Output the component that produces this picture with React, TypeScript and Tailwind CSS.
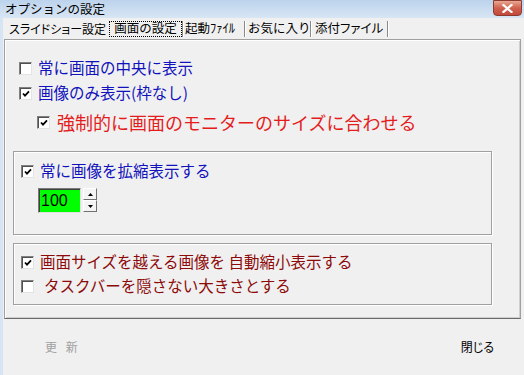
import React from "react"

const font = "font-['MS_UI_Gothic','Noto_Sans_CJK_JP',sans-serif]"

function CheckBox({ checked }: { checked?: boolean }) {
  return (
    <div className="relative w-[13px] h-[13px] shrink-0 bg-white border border-t-[#808080] border-l-[#808080] border-r-[#e3e3e3] border-b-[#e3e3e3] shadow-[inset_1px_1px_0_#505050]">
      {checked && (
        <svg className="absolute left-[1px] top-[1px]" width="10" height="10" viewBox="0 0 10 10">
          <path d="M2 4.5 L4 6.6 L8 2.4" stroke="#000" strokeWidth="1.8" fill="none" />
        </svg>
      )}
    </div>
  )
}

function Row({ checked, children, className = "" }: { checked?: boolean; children: React.ReactNode; className?: string }) {
  return (
    <div className={"flex items-center h-[24px] gap-[6px] whitespace-nowrap " + className}>
      <CheckBox checked={checked} />
      {children}
    </div>
  )
}

function Sep() {
  return <div className="w-[2px] h-[16px] shrink-0 border-l border-l-[#8a8a8a] border-r border-r-white" />
}

export default function App() {
  return (
    <div className={"w-[524px] h-[375px] flex flex-col bg-[#f0f0f0] overflow-hidden text-black " + font}>
      {/* title bar */}
      <div className="h-[18px] flex items-start bg-gradient-to-b from-[#bcd3ec] to-[#d8e6f4]">
        <span className="pl-[5px] pt-[1px] text-[12.5px] leading-[16px] whitespace-nowrap">オプションの設定</span>
        <div className="ml-auto mr-[2px] w-[29px] h-[16px] rounded-b-[4px] border border-[#8d3a30] bg-gradient-to-b from-[#e8a894] via-[#d0604e] to-[#c24a3a] flex items-center justify-center">
          <svg width="11" height="9" viewBox="0 0 11 9">
            <path d="M1.5 1 L9.5 8 M9.5 1 L1.5 8" stroke="#fff" strokeWidth="2.2" strokeLinecap="square" />
          </svg>
        </div>
      </div>

      <div className="flex-1 flex">
        <div className="w-[3px] bg-[#d6e4f4]" />
        <div className="flex-1 flex flex-col">
          {/* tabs */}
          <div className="h-[21px] flex items-center pl-[2px] text-[12px] leading-none whitespace-nowrap">
            <div className="w-[104px] shrink-0 pl-[4px] [font-feature-settings:'palt']">スライドショー設定</div>
            <div className="w-[73px] shrink-0 h-[16px] border border-dotted border-black flex items-center justify-center text-[12.5px]">画面の設定</div>
            <Sep />
            <div className="w-[60px] shrink-0 pl-[1px] text-[12.5px]">起動ﾌｧｲﾙ</div>
            <Sep />
            <div className="w-[64px] shrink-0 pl-[2px] text-[12.5px]">お気に入り</div>
            <Sep />
            <div className="w-[75px] shrink-0 pl-[3px] [font-feature-settings:'palt'] text-[12.5px]">添付ファイル</div>
            <Sep />
          </div>

          {/* panel */}
          <div className="mx-[1px] h-[280px] border border-t-[#a0a0a0] border-l-[#a0a0a0] border-r-[#a0a0a0] border-b-[#6a6a6a] shadow-[inset_1px_1px_0_#fff,inset_-1px_-1px_0_#cfcfcf] pl-[8px] pt-[16px]">
            <div className="pl-[6px] text-[#1212bc] text-[15.5px] leading-none">
              <Row>常に画面の中央に表示</Row>
              <Row checked className="mt-[1px]">画像のみ表示(枠なし)</Row>
            </div>
            <div className="pl-[24px] mt-[4px] flex items-center h-[26px] gap-[7px] whitespace-nowrap">
              <CheckBox checked />
              <span className="text-[18px] leading-none text-[#e41c1c]">強制的に画面のモニターのサイズに合わせる</span>
            </div>

            <div className="mt-[16px] w-[479px] h-[84px] border border-[#a0a0a0] shadow-[inset_1px_1px_0_#fff,1px_1px_0_#fff] pl-[7px] pt-[7px]">
              <Row checked className="text-[#1212bc] text-[15.5px] leading-none">常に画像を拡縮表示する</Row>
              <div className="mt-[5px] ml-[17px] flex items-start gap-[2px]">
                <div className="w-[43px] h-[25px] bg-[#00ff00] border border-t-[#7a7a7a] border-l-[#7a7a7a] border-r-[#e0e0e0] border-b-[#e0e0e0] shadow-[inset_1px_1px_0_#404040] flex items-center pl-[2px] font-['Liberation_Sans',sans-serif] text-[16px] leading-none">
                  100
                </div>
                <div className="flex flex-col">
                  <div className="w-[14px] h-[12px] bg-[#f4f4f4] border border-t-white border-l-white border-r-[#707070] border-b-[#707070] flex items-center justify-center">
                    <svg width="5" height="3" viewBox="0 0 5 3"><path d="M2.5 0 L5 3 L0 3 Z" fill="#000" /></svg>
                  </div>
                  <div className="w-[14px] h-[12px] bg-[#f4f4f4] border border-t-white border-l-white border-r-[#707070] border-b-[#707070] flex items-center justify-center">
                    <svg width="5" height="3" viewBox="0 0 5 3"><path d="M0 0 L5 0 L2.5 3 Z" fill="#000" /></svg>
                  </div>
                </div>
              </div>
            </div>

            <div className="mt-[8px] w-[479px] h-[62px] border border-[#a0a0a0] shadow-[inset_1px_1px_0_#fff,1px_1px_0_#fff] pl-[7px] pt-[6px] text-[#8c0a0a] text-[15.5px] leading-none">
              <Row checked>画面サイズを越える画像を 自動縮小表示する</Row>
              <Row><span className="pl-[4px]">タスクバーを隠さない大きさとする</span></Row>
            </div>
          </div>

          {/* footer */}
          <div className="flex-1 flex items-center justify-between pl-[42px] pr-[28px] text-[12px] leading-none pb-[1px]">
            <span className="text-[#a0a0a0] tracking-[3px]">更 新</span>
            <span className="[font-feature-settings:'palt']">閉じる</span>
          </div>
        </div>
        <div className="w-[2px]" />
      </div>
    </div>
  )
}
